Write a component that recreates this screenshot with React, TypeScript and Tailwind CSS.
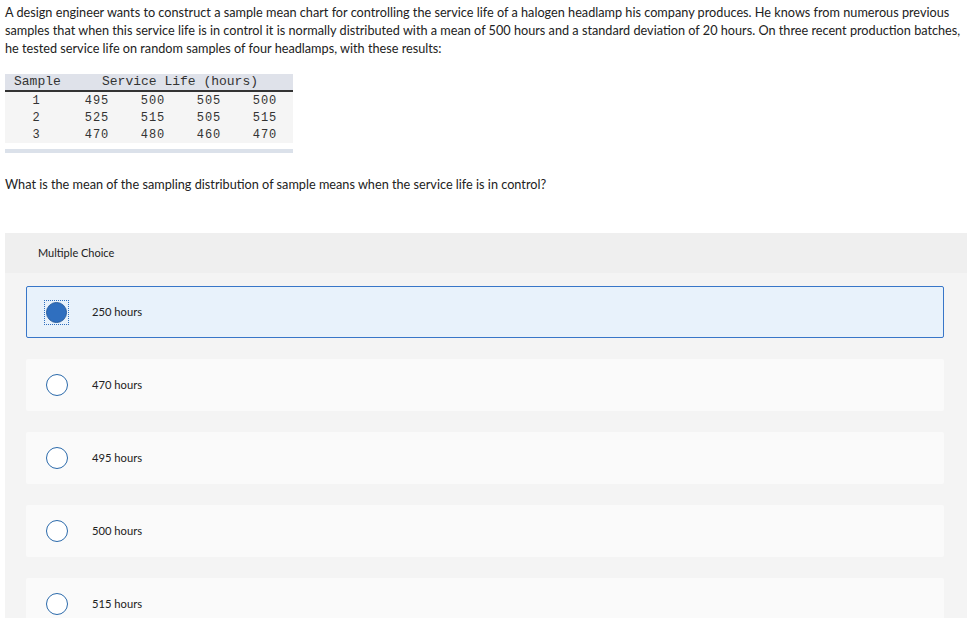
import React from "react";

const rows = [
  ["1", "495", "500", "505", "500"],
  ["2", "525", "515", "505", "515"],
  ["3", "470", "480", "460", "470"],
];

const options = ["250 hours", "470 hours", "495 hours", "500 hours", "515 hours"];

const lines = [
  "A design engineer wants to construct a sample mean chart for controlling the service life of a halogen headlamp his company produces. He knows from numerous previous",
  "samples that when this service life is in control it is normally distributed with a mean of 500 hours and a standard deviation of 20 hours. On three recent production batches,",
  "he tested service life on random samples of four headlamps, with these results:",
];

export default function App() {
  return (
    <div className="w-[974px] h-[618px] overflow-hidden bg-white text-[#222] font-['Lato','Liberation_Sans',sans-serif]">
      <div className="px-[5px] pt-[3px] text-[12.7px] leading-[18px]">
        {lines.map((l) => (
          <div key={l} className="whitespace-nowrap w-fit">{l}</div>
        ))}
      </div>
      <div className="ml-[5px] mt-[17px] w-[288px] font-['Liberation_Mono',monospace] text-[12px] text-[#333]">
        <div className="flex h-[18px] items-center bg-[#dfe2ea] border-b-2 border-[#333] text-[13px]">
          <div className="w-[62px] pl-[9px]">Sample</div>
          <div className="flex-1 text-center">Service Life (hours)</div>
        </div>
        <div className="bg-[#f5f5f5] tracking-[1px]">
          {rows.map((r) => (
            <div key={r[0]} className="flex h-[17px] items-center">
              <div className="w-[62px] text-center pl-[1px]">{r[0]}</div>
              {r.slice(1).map((v, i) => (
                <div key={i} className="w-[56px] text-center pl-[4px]">{v}</div>
              ))}
            </div>
          ))}
          <div className="h-[6px] bg-white" />
        </div>
        <div className="h-[4px] bg-[#dbe1ea]" />
      </div>
      <p className="px-[5px] mt-[22px] text-[12.7px] leading-[18px]">
        What is the mean of the sampling distribution of sample means when the service life is in control?
      </p>
      <div className="ml-[5px] mt-[40px] w-[962px] bg-[#f4f4f4] h-[400px]">
        <div className="h-[40px] bg-[#efefef] flex items-center pl-[33px] text-[11px]">Multiple Choice</div>
        <div className="pl-[21px] pr-[23px] pt-[13px] flex flex-col gap-[21px]">
          {options.map((o, i) => (
            <div
              key={o}
              className={
                i === 0
                  ? "h-[52px] flex items-center rounded-[2px] border border-[#3876c8] bg-[#e8f2fb]"
                  : "h-[52px] flex items-center rounded-[2px] border border-transparent bg-[#fafafa]"
              }
            >
              <div className="w-[65px] flex justify-start pl-[17px]">
                {i === 0 ? (
                  <div className="p-[1px] border border-dotted border-[#2f6fbf]">
                    <div className="w-[21px] h-[21px] rounded-full bg-[#2f6fbf] border border-[#2a5f9f]" />
                  </div>
                ) : (
                  <div className="ml-[2px] w-[22px] h-[22px] rounded-full bg-white border-[1.5px] border-[#2b6aab]" />
                )}
              </div>
              <span className="text-[11.2px]">{o}</span>
            </div>
          ))}
        </div>
      </div>
    </div>
  );
}
